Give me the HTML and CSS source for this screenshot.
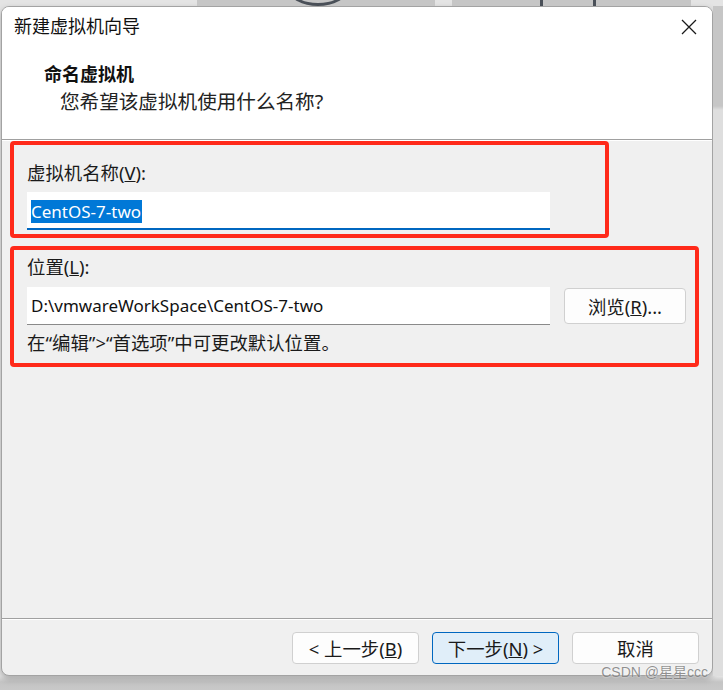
FILE: index.html
```html
<!DOCTYPE html>
<html lang="zh-CN">
<head>
<meta charset="utf-8">
<title>新建虚拟机向导</title>
<link rel="stylesheet" href="styles.css">
</head>
<body>
<div class="screen">
  <div class="strip">
    <div class="strip-gap1"></div>
    <div class="strip-block b1"><span class="arc"></span></div>
    <div class="strip-gap2"></div>
    <div class="strip-block b2"><span class="vline"></span><span class="vline"></span></div>
  </div>
  <div class="row">
    <div class="dialog">
      <div class="header">
        <div class="titlebar">
          <span class="title">新建虚拟机向导</span>
          <svg class="close" width="16" height="16" viewBox="0 0 16 16"><path d="M1 1 L15 15 M15 1 L1 15" stroke="#1a1a1a" stroke-width="1.3" fill="none"/></svg>
        </div>
        <div class="heading">命名虚拟机</div>
        <div class="subheading">您希望该虚拟机使用什么名称?</div>
      </div>
      <div class="content">
        <div class="mark mark-name">
          <div class="label">虚拟机名称(<u>V</u>):</div>
          <div class="field field-focus"><span class="sel">CentOS-7-two</span></div>
        </div>
        <div class="mark mark-loc">
          <div class="label">位置(<u>L</u>):</div>
          <div class="loc-row">
            <div class="field field-plain">D:\vmwareWorkSpace\CentOS-7-two</div>
            <button class="btn browse">浏览(<u>R</u>)...</button>
          </div>
          <div class="note">在“编辑”&gt;“首选项”中可更改默认位置。</div>
        </div>
      </div>
      <div class="footer">
        <button class="btn step">&lt; 上一步(<u>B</u>)</button>
        <button class="btn step primary">下一步(<u>N</u>) &gt;</button>
        <button class="btn step">取消</button>
      </div>
    </div>
    <div class="side"></div>
  </div>
  <div class="watermark">CSDN @星星ccc</div>
</div>
</body>
</html>
```

FILE: styles.css
```css
html, body {
  margin: 0;
  padding: 0;
}
body {
  width: 723px;
  height: 690px;
  overflow: hidden;
  background: #cfcfcf;
  font-family: "Noto Sans", "Noto Sans CJK SC", sans-serif;
  color: #1a1a1a;
}
.screen {
  position: relative;
  width: 723px;
  height: 690px;
  display: flex;
  flex-direction: column;
  background: linear-gradient(to bottom, #e4e4e4 0, #e4e4e4 676px, #c4c4c4 682px, #c8c8c8 690px);
}
.strip {
  height: 6px;
  display: flex;
  flex-shrink: 0;
  overflow: hidden;
}
.strip-gap1 { width: 197px; }
.strip-gap2 { width: 17px; }
.strip-block {
  background: #c6c6c6;
  position: relative;
}
.b1 { width: 238px; }
.b2 { width: 239px; display: flex; gap: 50px; padding-left: 88px; box-sizing: border-box; }
.arc {
  position: absolute;
  left: 92px;
  top: -26px;
  width: 52px;
  height: 26px;
  border: 3px solid #4a5058;
  border-radius: 50%;
}
.vline {
  width: 3px;
  height: 6px;
  background: #4a5058;
}
.row {
  display: flex;
  height: 670px;
  flex-shrink: 0;
}
.dialog {
  margin-left: 1px;
  width: 712px;
  height: 670px;
  box-sizing: border-box;
  border: 1px solid #a3a3a3;
  border-radius: 8px;
  background: #f0f0f0;
  overflow: hidden;
  display: flex;
  flex-direction: column;
  box-shadow: 0 3px 6px rgba(0,0,0,0.25);
}
.side {
  flex: 1;
  background: linear-gradient(to bottom, #c6c6c6 0, #c6c6c6 100px, #dedede 104px, #dedede 100%);
}
.header {
  background: #ffffff;
  height: 132px;
  border-bottom: 1px solid #a0a0a0;
  box-shadow: 0 1px 0 #ffffff;
  flex-shrink: 0;
}
.titlebar {
  display: flex;
  justify-content: space-between;
  align-items: center;
  padding: 6px 15px 0 12px;
  height: 27px;
}
.title {
  font-size: 18px;
  line-height: 27px;
  color: #111;
}
.close {
  display: block;
}
.heading {
  margin-top: 22px;
  padding-left: 42px;
  font-size: 18px;
  font-weight: 700;
  line-height: 24px;
  color: #111;
}
.subheading {
  margin-top: 2px;
  padding-left: 58px;
  font-size: 19.6px;
  line-height: 28px;
  color: #222;
}
.content {
  flex: 1;
  padding: 1px 0 0 8px;
}
.mark {
  border: 4px solid #ff2a1a;
  border-radius: 4px;
  box-sizing: border-box;
}
.mark-name {
  width: 599px;
  height: 97px;
  padding: 15px 0 0 13px;
}
.mark-loc {
  margin-top: 8px;
  width: 689px;
  height: 121px;
  padding: 4px 0 0 13px;
}
.label {
  font-size: 18.4px;
  line-height: 26px;
  color: #1a1a1a;
}
.field {
  width: 523px;
  height: 38px;
  box-sizing: border-box;
  background: #ffffff;
  display: flex;
  align-items: center;
  padding-left: 4px;
  font-size: 17px;
  color: #111;
}
.field-focus {
  margin-top: 6px;
  border-bottom: 2px solid #0067c0;
  padding-top: 2px;
}
.sel {
  background: #0078d7;
  color: #ffffff;
  line-height: 23px;
  padding-right: 1px;
}
.loc-row {
  display: flex;
  align-items: center;
  gap: 14px;
  margin-top: 7px;
}
.field-plain {
  border-bottom: 1px solid #8a8a8a;
  padding-top: 0;
}
.btn {
  font-family: "Noto Sans", "Noto Sans CJK SC", sans-serif;
  font-size: 18.4px;
  color: #1a1a1a;
  background: #fdfdfd;
  border: 1px solid #d0d0d0;
  border-radius: 4px;
  padding: 0;
  margin: 0;
}
.browse {
  width: 122px;
  height: 36px;
}
.note {
  margin-top: 5px;
  font-size: 18.4px;
  line-height: 26px;
  color: #1a1a1a;
}
.footer {
  height: 57px;
  flex-shrink: 0;
  border-top: 1px solid #a0a0a0;
  box-shadow: inset 0 1px 0 #ffffff;
  display: flex;
  justify-content: flex-end;
  align-items: flex-start;
  gap: 13px;
  padding: 13px 13px 0 0;
  box-sizing: border-box;
}
.step {
  width: 127px;
  height: 32px;
}
.primary {
  background: #e0eef9;
  border-color: #0067c0;
}
.watermark {
  position: absolute;
  right: 15px;
  bottom: 9px;
  font-family: "Liberation Sans", "Noto Sans CJK SC", sans-serif;
  font-size: 14px;
  color: rgba(110,110,110,0.75);
  text-shadow: 0 0 2px rgba(255,255,255,0.9);
}
```
